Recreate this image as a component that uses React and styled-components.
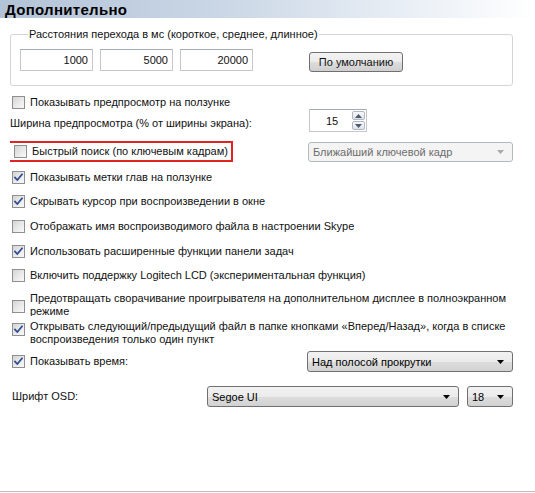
import React from 'react'
import styled, { createGlobalStyle } from 'styled-components'

const GlobalStyle = createGlobalStyle`
  html, body {
    margin: 0;
    padding: 0;
    background: #ffffff;
  }
  body {
    font-family: "Liberation Sans", Arial, sans-serif;
    font-size: 11px;
    color: #111111;
  }
`

const Page = styled.div`
  width: 535px;
  height: 493px;
  display: flex;
  flex-direction: column;
  overflow: hidden;
`

const Header = styled.div`
  height: 18px;
  flex-shrink: 0;
  display: flex;
  align-items: center;
  padding-left: 5px;
  background: linear-gradient(to right, #b3c3d7 0%, #c9d6e5 40%, #e8eef5 75%, #ffffff 100%);
`

const Title = styled.div`
  font-weight: bold;
  font-size: 15px;
  letter-spacing: 0.3px;
  color: #000000;
`

const Content = styled.div`
  display: flex;
  flex-direction: column;
  padding: 0 22px 0 10px;
`

const GroupBox = styled.fieldset`
  margin: 10px 0 0 0;
  padding: 8px 8px 13px 9px;
  border: 1px solid #d5d5d5;
  border-radius: 3px;
  display: flex;
  align-items: flex-start;
  min-width: 0;
`

const Legend = styled.legend`
  margin-left: 8px;
  padding: 0 1px;
  line-height: 13px;
`

const TextBox = styled.div`
  width: 73px;
  height: 22px;
  box-sizing: border-box;
  border: 1px solid #c7c7c7;
  border-top-color: #a4abb3;
  background: #ffffff;
  display: flex;
  align-items: center;
  justify-content: flex-end;
  padding-right: 4px;
  margin-right: 7px;
`

const Button = styled.div`
  margin: 3px 0 0 49px;
  width: 94px;
  height: 20px;
  box-sizing: border-box;
  border: 1px solid #707070;
  border-radius: 3px;
  background: linear-gradient(#f3f3f3 0%, #ebebeb 50%, #dddddd 51%, #cfcfcf 100%);
  display: flex;
  align-items: center;
  justify-content: center;
`

const Row = styled.div`
  display: flex;
  align-items: ${p => (p.$top ? 'flex-start' : 'center')};
  height: ${p => p.$h}px;
  margin-top: ${p => p.$mt}px;
  flex-shrink: 0;
  overflow: hidden;
`

const Highlight = styled.div`
  display: flex;
  align-items: center;
  height: 21px;
  width: 225px;
  box-sizing: border-box;
  margin-left: -2px;
  padding-left: 2px;
  border: 2px solid #e02424;
`

const Label = styled.div`
  white-space: nowrap;
  line-height: 13px;
  padding-top: ${p => p.$pt || 0}px;
  padding-left: ${p => p.$pl || 0}px;
`

const BoxWrap = styled.div`
  width: 13px;
  height: 13px;
  box-sizing: border-box;
  flex-shrink: 0;
  margin: ${p => p.$mt || 0}px 5px 0 2px;
  border: 1px solid #8f8f8f;
  background: linear-gradient(135deg, #d4d4d4 0%, #e8e8e8 50%, #f9f9f9 100%);
  display: flex;
  align-items: center;
  justify-content: center;
`

const Spacer = styled.div`
  flex: ${p => (p.$w ? 'none' : 1)};
  width: ${p => (p.$w ? `${p.$w}px` : 'auto')};
`

const SpinWrap = styled.div`
  display: flex;
  height: 23px;
`

const SpinInput = styled.div`
  width: 43px;
  box-sizing: border-box;
  border: 1px solid #c7c7c7;
  border-top-color: #a4abb3;
  border-right: none;
  display: flex;
  align-items: center;
  justify-content: center;
  padding-left: 2px;
`

const SpinButtons = styled.div`
  width: 15px;
  box-sizing: border-box;
  border: 1px solid #c7c7c7;
  border-top-color: #a4abb3;
  border-left: none;
  padding: 1px 1px 1px 0;
  display: flex;
  flex-direction: column;
  gap: 1px;
`

const SpinButton = styled.div`
  flex: 1;
  border: 1px solid #b0b8c2;
  border-radius: 2px;
  background: linear-gradient(#f7f8fa, #dfe3e8);
  display: flex;
  align-items: center;
  justify-content: center;
`

const Combo = styled.div`
  margin-left: ${p => p.$ml || 0}px;
  width: ${p => p.$w}px;
  height: ${p => p.$h || 21}px;
  box-sizing: border-box;
  flex-shrink: 0;
  border: 1px solid ${p => (p.$disabled ? '#b4b9c0' : '#707070')};
  border-radius: 3px;
  background: ${p =>
    p.$disabled
      ? '#f4f4f4'
      : 'linear-gradient(#f2f2f2 0%, #ebebeb 50%, #dddddd 51%, #d2d2d2 100%)'};
  color: ${p => (p.$disabled ? '#6d6d6d' : '#000000')};
  display: flex;
  align-items: center;
  padding: 0 8px 0 4px;
`

const ComboText = styled.div`
  flex: 1;
  white-space: nowrap;
`

const Divider = styled.div`
  height: 1px;
  background: #bdbdbd;
  margin-bottom: 1px;
  flex-shrink: 0;
`

const Tick = () => (
  <svg width="9" height="9" viewBox="0 0 9 9">
    <path
      d="M1 4.6 L3.3 7 L8 1.4"
      fill="none"
      stroke="#2b4a93"
      strokeWidth="1.8"
      strokeLinecap="square"
    />
  </svg>
)

const Arrow = ({ color = '#000', up }) => (
  <svg width="7" height="4" viewBox="0 0 7 4">
    <path d={up ? 'M0 4 L3.5 0 L7 4 Z' : 'M0 0 L7 0 L3.5 4 Z'} fill={color} />
  </svg>
)

const CheckBox = ({ checked, mt }) => (
  <BoxWrap $mt={mt}>{checked && <Tick />}</BoxWrap>
)

const CheckRow = ({ checked, children, mt }) => (
  <Row $h={20} $mt={mt}>
    <CheckBox checked={checked} />
    <Label>{children}</Label>
  </Row>
)

export default function App() {
  return (
    <Page>
      <GlobalStyle />
      <Header>
        <Title>Дополнительно</Title>
      </Header>

      <Content>
        <GroupBox>
          <Legend>Расстояния перехода в мс (короткое, среднее, длинное)</Legend>
          <TextBox>1000</TextBox>
          <TextBox>5000</TextBox>
          <TextBox>20000</TextBox>
          <Button>По умолчанию</Button>
        </GroupBox>

        <CheckRow mt={6}>Показывать предпросмотр на ползунке</CheckRow>

        <Row $h={23} $mt={-3}>
          <Label $pt={6}>Ширина предпросмотра (% от ширины экрана):</Label>
          <Spacer />
          <SpinWrap>
            <SpinInput>15</SpinInput>
            <SpinButtons>
              <SpinButton>
                <Arrow up color="#4d5a6b" />
              </SpinButton>
              <SpinButton>
                <Arrow color="#4d5a6b" />
              </SpinButton>
            </SpinButtons>
          </SpinWrap>
          <Spacer $w={146} />
        </Row>

        <Row $h={21} $mt={9}>
          <Highlight>
            <CheckBox />
            <Label>Быстрый поиск (по ключевым кадрам)</Label>
          </Highlight>
          <Spacer />
          <Combo $w={205} $h={20} $disabled>
            <ComboText>Ближайший ключевой кадр</ComboText>
            <Arrow color="#a8a8a8" />
          </Combo>
        </Row>

        <CheckRow checked mt={5}>Показывать метки глав на ползунке</CheckRow>
        <CheckRow checked mt={4.7}>Скрывать курсор при воспроизведении в окне</CheckRow>
        <CheckRow mt={4.7}>Отображать имя воспроизводимого файла в настроении Skype</CheckRow>
        <CheckRow checked mt={4.7}>Использовать расширенные функции панели задач</CheckRow>
        <CheckRow mt={4.7}>Включить поддержку Logitech LCD (экспериментальная функция)</CheckRow>

        <Row $h={24} $mt={6} $top>
          <CheckBox mt={8} />
          <Label>
            Предотвращать сворачивание проигрывателя на дополнительном дисплее в полноэкранном
            <br />
            режиме
          </Label>
        </Row>

        <Row $h={26} $mt={4} $top>
          <CheckBox checked mt={3} />
          <Label>
            Открывать следующий/предыдущий файл в папке кнопками «Вперед/Назад», когда в списке
            <br />
            воспроизведения только один пункт
          </Label>
        </Row>

        <Row $h={21} $mt={5.5}>
          <CheckBox checked />
          <Label>Показывать время:</Label>
          <Spacer />
          <Combo $w={206}>
            <ComboText>Над полосой прокрутки</ComboText>
            <Arrow />
          </Combo>
        </Row>

        <Row $h={21} $mt={14}>
          <Label $pl={2}>Шрифт OSD:</Label>
          <Spacer />
          <Combo $w={252}>
            <ComboText>Segoe UI</ComboText>
            <Arrow />
          </Combo>
          <Combo $ml={8} $w={46}>
            <ComboText>18</ComboText>
            <Arrow />
          </Combo>
        </Row>
      </Content>

      <Spacer />
      <Divider />
    </Page>
  )
}
